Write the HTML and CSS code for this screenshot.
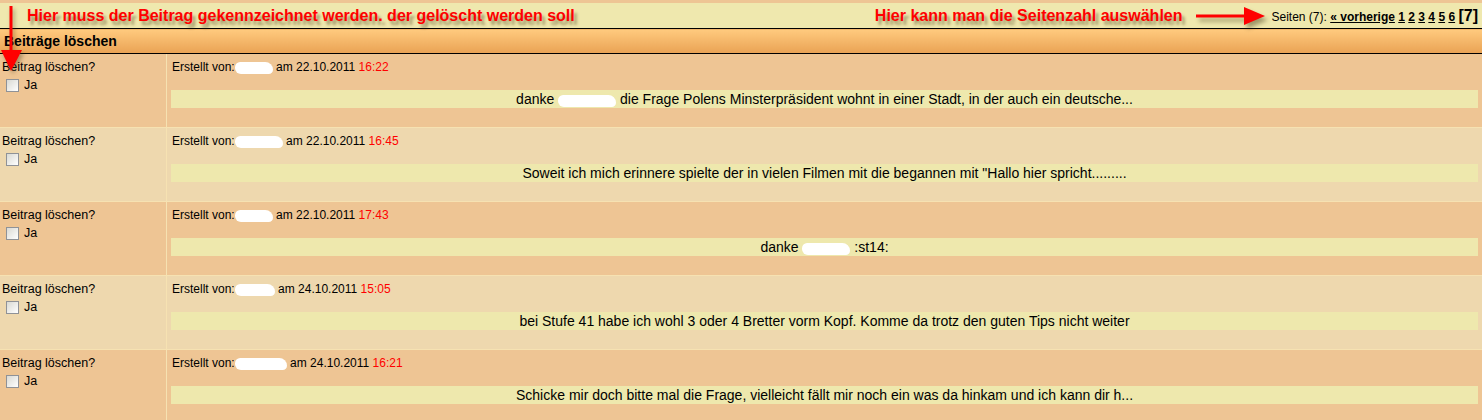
FILE: index.html
```html
<!DOCTYPE html>
<html>
<head>
	<meta charset="utf-8"/>
	<title>Beiträge löschen</title>
	<link rel="stylesheet" href="styles.css">
</head>
<body>
<div class="topbar">
	<span class="note">Hier muss der Beitrag gekennzeichnet werden. der gelöscht werden soll</span>
	<span class="note note-right">Hier kann man die Seitenzahl auswählen</span>
	<svg class="arrow-right" width="72" height="22" viewBox="0 0 72 22">
		<line x1="2" y1="11" x2="52" y2="11" stroke="#ff0000" stroke-width="3"/>
		<polygon points="50,2 71,11 50,20" fill="#ff0000"/>
	</svg>
	<div class="pages">
		Seiten (7): <a href="#">« vorherige</a> <a href="#">1</a> <a href="#">2</a> <a href="#">3</a> <a href="#">4</a> <a href="#">5</a> <a href="#">6</a> <b class="current">[7]</b>
	</div>
</div>

<svg class="arrow-down" width="26" height="66" viewBox="0 0 26 66">
	<line x1="11" y1="0" x2="11" y2="46" stroke="#ff0000" stroke-width="3"/>
	<polygon points="1,44 22,44 11,65" fill="#ff0000"/>
</svg>

<table class="posts">
	<tr>
		<th colspan="2">Beiträge löschen</th>
	</tr>
	<tr class="row1">
		<td class="left">
			<div>Beitrag löschen?</div>
			<label class="ja"><input type="checkbox"/> Ja</label>
		</td>
		<td class="right">
			<div class="meta">Erstellt von:<span class="blob" style="width:38px"></span> am 22.10.2011 <span class="time">16:22</span></div>
			<div class="msg">danke <span class="blob" style="width:58px"></span> die Frage Polens Minsterpräsident wohnt in einer Stadt, in der auch ein deutsche...</div>
		</td>
	</tr>
	<tr class="row2">
		<td class="left">
			<div>Beitrag löschen?</div>
			<label class="ja"><input type="checkbox"/> Ja</label>
		</td>
		<td class="right">
			<div class="meta">Erstellt von:<span class="blob" style="width:48px"></span> am 22.10.2011 <span class="time">16:45</span></div>
			<div class="msg">Soweit ich mich erinnere spielte der in vielen Filmen mit die begannen mit "Hallo hier spricht.........</div>
		</td>
	</tr>
	<tr class="row1">
		<td class="left">
			<div>Beitrag löschen?</div>
			<label class="ja"><input type="checkbox"/> Ja</label>
		</td>
		<td class="right">
			<div class="meta">Erstellt von:<span class="blob" style="width:38px"></span> am 22.10.2011 <span class="time">17:43</span></div>
			<div class="msg">danke <span class="blob" style="width:48px"></span> :st14:</div>
		</td>
	</tr>
	<tr class="row2">
		<td class="left">
			<div>Beitrag löschen?</div>
			<label class="ja"><input type="checkbox"/> Ja</label>
		</td>
		<td class="right">
			<div class="meta">Erstellt von:<span class="blob" style="width:40px"></span> am 24.10.2011 <span class="time">15:05</span></div>
			<div class="msg">bei Stufe 41 habe ich wohl 3 oder 4 Bretter vorm Kopf. Komme da trotz den guten Tips nicht weiter</div>
		</td>
	</tr>
	<tr class="row1">
		<td class="left">
			<div>Beitrag löschen?</div>
			<label class="ja"><input type="checkbox"/> Ja</label>
		</td>
		<td class="right">
			<div class="meta">Erstellt von:<span class="blob" style="width:52px"></span> am 24.10.2011 <span class="time">16:21</span></div>
			<div class="msg">Schicke mir doch bitte mal die Frage, vielleicht fällt mir noch ein was da hinkam und ich kann dir h...</div>
		</td>
	</tr>
</table>
</body>
</html>
```

FILE: styles.css
```css
* {
	color: #000;
}

body {
	margin: 0;
	padding: 3px 0 0 0;
	background: #eec594;
	font-family: "Liberation Sans", Arial, sans-serif;
	font-size: 12px;
	overflow: hidden;
	position: relative;
}

.topbar {
	display: flex;
	align-items: center;
	height: 25px;
	background: #efe8ae;
	padding: 0 4px 0 27px;
}

.note {
	color: #ff0000;
	font-weight: bold;
	font-size: 16px;
	text-shadow: 3px 4px 3px rgba(60, 50, 20, 0.45);
}

.note-right {
	margin-left: auto;
}

.arrow-right {
	margin: 0 6px 0 11px;
	filter: drop-shadow(3px 4px 2px rgba(60, 50, 20, 0.45));
}

.pages {
	font-size: 12px;
	white-space: nowrap;
}

.pages a {
	font-weight: bold;
	text-decoration: underline;
}

.pages .current {
	font-size: 16px;
}

.arrow-down {
	position: absolute;
	left: 0;
	top: 6px;
	filter: drop-shadow(2px 3px 2px rgba(60, 50, 20, 0.4));
}

.posts {
	width: 100%;
	border-collapse: collapse;
}

.posts th {
	text-align: left;
	font-size: 14px;
	font-weight: bold;
	height: 24px;
	padding: 0 4px;
	border-top: 1px solid #000;
	border-bottom: 1px solid #000;
	background: linear-gradient(#ffca7e, #e9a254);
}

.posts td {
	height: 67px;
	vertical-align: top;
	border-bottom: 1px solid #f6e2b2;
	padding: 0;
}

.row1 td {
	background: #eec594;
}

.row2 td {
	background: #eed8ae;
}

.posts tr:first-child + tr td {
	border-top: 1px solid #f6e2b2;
}

td.left {
	width: 164px;
	font-size: 12.5px;
	border-right: 1px solid #f6e2b2;
	padding: 6px 0 0 2px;
}

.ja {
	display: flex;
	align-items: center;
	gap: 5px;
	margin: 4px 0 0 4px;
}

.ja input {
	appearance: none;
	-webkit-appearance: none;
	width: 13px;
	height: 13px;
	margin: 0;
	border: 1px solid #8f9297;
	background: linear-gradient(135deg, #d9d9d3, #ffffff);
}

td.right {
	padding: 6px 4px 0 5px;
}

.meta {
	font-size: 12px;
	height: 14px;
	line-height: 14px;
}

.time {
	color: #ff0000;
}

.blob {
	display: inline-block;
	height: 12px;
	vertical-align: -3px;
	background: #fff;
	border-radius: 6px 9px 5px 7px;
}

.msg {
	margin: 16px 0 0 -1px;
	height: 18px;
	line-height: 18px;
	text-align: center;
	font-size: 14px;
	background: #eee8ad;
}
```
